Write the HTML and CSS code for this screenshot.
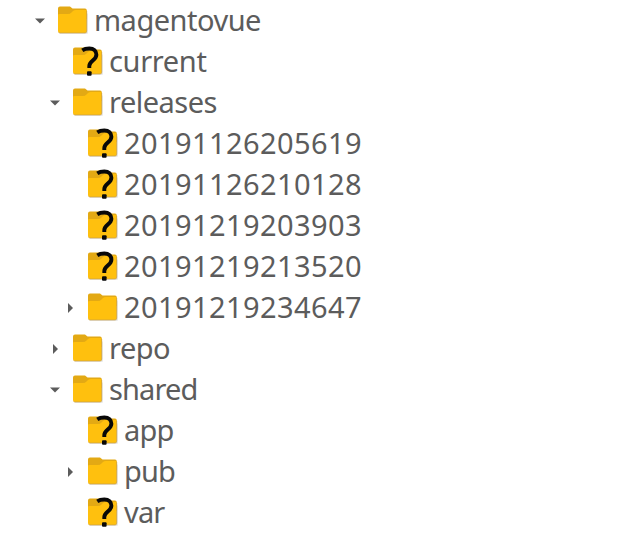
FILE: index.html
```html
<!DOCTYPE html>
<html lang="en"><head><meta charset="utf-8"><title>Remote tree</title><link rel="stylesheet" href="styles.css"></head>
<body>
<svg class="defs" aria-hidden="true">
<defs>
<g id="folder"><path d="M2 8H29.500Q31 8 31 9.500V27.500Q31 29 29.500 29H3Z" fill="#e8e8e8"/><path d="M1 3.500Q1 1.500 3 1.500H13L15.500 3.500H28Q29.800 3.500 29.800 5.500V14H1Z" fill="#e3a914"/><path d="M1 9.700Q1 9 2.500 9H11Q13 9 14.500 7.500L16 6Q17 5 19 5H28.500Q29.800 5 29.800 6.500V26Q29.800 28 28 28H2.800Q1 28 1 26Z" fill="#ffc00e"/><path d="M1.500 27.200Q2 28 3 28H28Q29.700 28 29.700 26V6" fill="none" stroke="#c59d4b" stroke-width=".7"/></g>
<g id="mark"><path d="M10.300 4.300C12 3.200 14.500 2.500 17.300 2.500C21.800 2.500 24.400 4.900 24.400 8.700C24.400 14.200 17.300 14.800 17.300 20V22" fill="none" stroke="#080808" stroke-width="3.900"/><rect x="15" y="25.300" width="4.600" height="4.500" rx="1" fill="#080808"/></g>
</defs></svg>
<main id="tree" class="tree"></main>
<script src="tree.js"></script>
</body></html>
```
FILE: styles.css
```css
body{margin:0;background:#fff;color:#5c5c5c;font:29px "Noto Sans",sans-serif;overflow:hidden}
.defs{position:absolute;width:0;height:0}
.tree{display:flex;flex-direction:column}
.row{display:flex;align-items:center;height:41px;padding-left:34px;white-space:pre}
.depth-1{padding-left:49px}.depth-2{padding-left:64px}
.arrow{width:12px;height:12px;margin-right:11px}
.icon{width:32px;height:32px;margin-right:5px;overflow:visible}
.label{line-height:39px;padding-bottom:2px;letter-spacing:-.5px}
.number{letter-spacing:.42px}
.tight{letter-spacing:-.85px}
.loose{letter-spacing:-.35px}
```
FILE: tree.js
```js
const rows=[[0,'down','folder','magentovue'],[1,'','unknown','current','loose'],[1,'down','folder','releases'],[2,'','unknown','20191126205619','number'],[2,'','unknown','20191126210128','number'],[2,'','unknown','20191219203903','number'],[2,'','unknown','20191219213520','number'],[2,'right','folder','20191219234647','number'],[1,'right','folder','repo'],[1,'down','folder','shared','tight'],[2,'','unknown','app','tight'],[2,'right','folder','pub','tight'],[2,'','unknown','var','tight']];
const arrows={down:'M1 3.500H11L6 8.500Z',right:'M4 1V11L9 6Z','':''};
document.getElementById('tree').innerHTML=rows.map(([d,a,i,t,c=''])=>`<div class="row depth-${d}"><svg class="arrow" viewBox="0 0 12 12"><path d="${arrows[a]}" fill="#5c5c5c"/></svg><svg class="icon" viewBox="0 0 32 32"><use href="#folder"/>${i==='unknown'?'<use href="#mark"/>':''}</svg><span class="label ${c}">${t}</span></div>`).join('');
```
